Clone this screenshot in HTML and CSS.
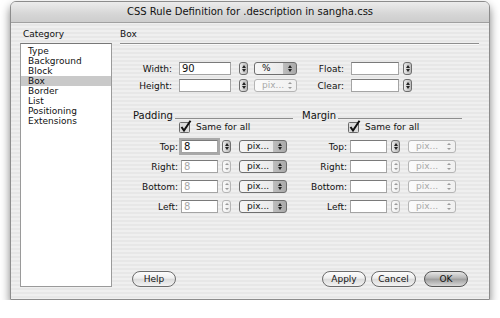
FILE: index.html
```html
<!DOCTYPE html>
<html lang="en">
<head>
    <meta charset="UTF-8">
    <title>CSS Rule Definition for .description in sangha.css</title>
    <link rel="stylesheet" href="styles.css">
</head>
<body>
    <div class="window">
        <div class="titlebar">CSS Rule Definition for .description in sangha.css</div>

        <div class="content">
            <div class="sidebar">
                <div class="caption">Category</div>
                <ul class="category-list">
                    <li>Type</li>
                    <li>Background</li>
                    <li>Block</li>
                    <li class="selected">Box</li>
                    <li>Border</li>
                    <li>List</li>
                    <li>Positioning</li>
                    <li>Extensions</li>
                </ul>
            </div>

            <div class="panel">
                <div class="panel-title">Box</div>

                <div class="box-rows">
                    <div class="row">
                        <span class="lbl lbl-main">Width:</span>
                        <span class="field field-main">90</span>
                        <span class="stepper"></span>
                        <span class="popup popup-small">%</span>
                        <span class="lbl lbl-side">Float:</span>
                        <span class="field field-side"></span>
                        <span class="stepper"></span>
                    </div>
                    <div class="row">
                        <span class="lbl lbl-main">Height:</span>
                        <span class="field field-main"></span>
                        <span class="stepper"></span>
                        <span class="popup popup-small disabled">pix...</span>
                        <span class="lbl lbl-side">Clear:</span>
                        <span class="field field-side"></span>
                        <span class="stepper"></span>
                    </div>
                </div>

                <div class="groups">
                    <div class="group">
                        <div class="group-title"><span>Padding</span></div>
                        <div class="same">
                            <svg class="check" width="14" height="13" viewBox="0 0 14 13">
                                <rect x="0.5" y="2.5" width="10" height="10" rx="1" fill="#dcdcdc" stroke="#6a6a6a"/>
                                <path d="M2.5 7 L5 10.5 L11.5 0.8" fill="none" stroke="#111" stroke-width="2"/>
                            </svg>
                            Same for all
                        </div>
                        <div class="side-row">
                            <span class="lbl lbl-side4">Top:</span>
                            <span class="field field-side4 focus">8</span>
                            <span class="stepper"></span>
                            <span class="popup popup-side4">pix...</span>
                        </div>
                        <div class="side-row">
                            <span class="lbl lbl-side4">Right:</span>
                            <span class="field field-side4 disabled">8</span>
                            <span class="stepper disabled"></span>
                            <span class="popup popup-side4">pix...</span>
                        </div>
                        <div class="side-row">
                            <span class="lbl lbl-side4">Bottom:</span>
                            <span class="field field-side4 disabled">8</span>
                            <span class="stepper disabled"></span>
                            <span class="popup popup-side4">pix...</span>
                        </div>
                        <div class="side-row">
                            <span class="lbl lbl-side4">Left:</span>
                            <span class="field field-side4 disabled">8</span>
                            <span class="stepper disabled"></span>
                            <span class="popup popup-side4">pix...</span>
                        </div>
                    </div>

                    <div class="group">
                        <div class="group-title"><span>Margin</span></div>
                        <div class="same">
                            <svg class="check" width="14" height="13" viewBox="0 0 14 13">
                                <rect x="0.5" y="2.5" width="10" height="10" rx="1" fill="#dcdcdc" stroke="#6a6a6a"/>
                                <path d="M2.5 7 L5 10.5 L11.5 0.8" fill="none" stroke="#111" stroke-width="2"/>
                            </svg>
                            Same for all
                        </div>
                        <div class="side-row">
                            <span class="lbl lbl-side4">Top:</span>
                            <span class="field field-side4"></span>
                            <span class="stepper"></span>
                            <span class="popup popup-side4 disabled">pix...</span>
                        </div>
                        <div class="side-row">
                            <span class="lbl lbl-side4">Right:</span>
                            <span class="field field-side4"></span>
                            <span class="stepper disabled"></span>
                            <span class="popup popup-side4 disabled">pix...</span>
                        </div>
                        <div class="side-row">
                            <span class="lbl lbl-side4">Bottom:</span>
                            <span class="field field-side4"></span>
                            <span class="stepper disabled"></span>
                            <span class="popup popup-side4 disabled">pix...</span>
                        </div>
                        <div class="side-row">
                            <span class="lbl lbl-side4">Left:</span>
                            <span class="field field-side4"></span>
                            <span class="stepper disabled"></span>
                            <span class="popup popup-side4 disabled">pix...</span>
                        </div>
                    </div>
                </div>

                <div class="buttons">
                    <span class="btn">Help</span>
                    <span class="spacer"></span>
                    <span class="btn">Apply</span>
                    <span class="btn btn-cancel">Cancel</span>
                    <span class="btn btn-default">OK</span>
                </div>
            </div>
        </div>
    </div>
</body>
</html>
```

FILE: styles.css
```css
* {
    margin: 0;
    padding: 0;
    box-sizing: border-box;
}

body {
    background: #fff;
    padding: 1px 10px 0 10px;
    font-family: "Lucida Grande", "DejaVu Sans", sans-serif;
    font-size: 9px;
    color: #111;
}

.window {
    width: 480px;
    height: 299px;
    border: 1px solid #8c8c8c;
    border-radius: 6px 6px 0 0;
    background: repeating-linear-gradient(#efefef 0 2px, #e7e7e7 2px 4px);
    box-shadow: 0 5px 10px rgba(0,0,0,0.5);
    display: flex;
    flex-direction: column;
    overflow: hidden;
}

.titlebar {
    height: 21px;
    line-height: 19px;
    text-align: center;
    font-size: 10px;
    color: #111;
    background: linear-gradient(#ececec, #d6d6d6 60%, #cdcdcd);
    border-bottom: 1px solid #a0a0a0;
}

.content {
    flex: 1;
    display: flex;
    padding: 5px 10px 12px 9px;
}

/* category list */
.sidebar {
    width: 92px;
    display: flex;
    flex-direction: column;
}

.caption {
    line-height: 12px;
    padding-left: 3px;
    height: 15px;
}

.category-list {
    list-style: none;
    flex: 1;
    background: #fff;
    border: 1px solid #9a9a9a;
    border-top-color: #777;
    padding-top: 2px;
}

.category-list li {
    height: 10px;
    line-height: 10px;
    padding-left: 7px;
}

.category-list li.selected {
    background: #c9c9c9;
}

/* right panel */
.panel {
    flex: 1;
    margin-left: 8px;
    display: flex;
    flex-direction: column;
}

.panel-title {
    line-height: 12px;
    padding-bottom: 3px;
    border-bottom: 1px solid #8e8e8e;
    box-shadow: 0 1px 0 #fafafa;
}

.box-rows {
    margin-top: 18px;
    display: flex;
    flex-direction: column;
    gap: 4px;
}

.row, .side-row {
    display: flex;
    align-items: center;
    height: 13px;
}

.lbl {
    text-align: right;
    margin-right: 7px;
}

.lbl-main { width: 52px; }
.lbl-side { width: 47px; margin-left: 0; }
.lbl-side4 { width: 45px; margin-right: 3px; }

.field {
    height: 13px;
    background: #fff;
    border: 1px solid #a4a4a4;
    border-top-color: #7a7a7a;
    line-height: 11px;
    padding-left: 2px;
    font-size: 10px;
}

.field.disabled {
    color: #a8a8a8;
}

.field.focus {
    box-shadow: 0 0 0 2px #a9a9a9;
}

.field-main { width: 52px; margin-right: 8px; }
.field-side { width: 48px; margin-right: 4px; }
.field-side4 { width: 37px; margin-right: 4px; }

.stepper {
    position: relative;
    width: 9px;
    height: 13px;
    border: 1px solid #6e6e6e;
    border-radius: 3px;
    background: linear-gradient(to right, #eee, #cfcfcf 50%, #bdbdbd);
    flex: none;
}

.stepper::before,
.stepper::after {
    content: "";
    position: absolute;
    left: 2px;
    border-left: 2px solid transparent;
    border-right: 2px solid transparent;
}

.stepper::before {
    top: 2px;
    border-bottom: 3px solid #222;
}

.stepper::after {
    bottom: 2px;
    border-top: 3px solid #222;
}

.stepper.disabled {
    border-color: #b5b5b5;
    background: linear-gradient(to right, #fafafa, #ececec);
}

.stepper.disabled::before { border-bottom-color: #9a9a9a; border-bottom-width: 2px; }
.stepper.disabled::after { border-top-color: #9a9a9a; border-top-width: 2px; }

.popup {
    position: relative;
    height: 13px;
    line-height: 11px;
    border: 1px solid #6e6e6e;
    border-radius: 3px;
    padding-left: 7px;
    background: linear-gradient(to right, #f6f6f6 0, #eaeaea calc(100% - 13px), #bdbdbd calc(100% - 13px), #a9a9a9);
    font-size: 9px;
    color: #111;
}

.popup::before,
.popup::after {
    content: "";
    position: absolute;
    right: 4px;
    border-left: 2px solid transparent;
    border-right: 2px solid transparent;
}

.popup::before {
    top: 2px;
    border-bottom: 3px solid #222;
}

.popup::after {
    bottom: 2px;
    border-top: 3px solid #222;
}

.popup.disabled {
    color: #a8a8a8;
    border-color: #b5b5b5;
    background: linear-gradient(to right, #fbfbfb, #f0f0f0);
}

.popup.disabled::before { border-bottom-color: #9a9a9a; border-bottom-width: 2px; }
.popup.disabled::after { border-top-color: #9a9a9a; border-top-width: 2px; }

.popup-small {
    width: 43px;
    margin-left: 6px;
}

.popup-side4 {
    width: 48px;
    margin-left: 8px;
}

/* padding / margin groups */
.groups {
    margin-top: 17px;
    display: flex;
    padding-left: 13px;
    gap: 9px;
}

.group {
    width: 160px;
    display: flex;
    flex-direction: column;
}

.group-title {
    display: flex;
    align-items: center;
    height: 12px;
    font-size: 10px;
}

.group-title::after {
    content: "";
    flex: 1;
    margin-left: 2px;
    margin-top: 6px;
    border-top: 1px solid #8e8e8e;
}

.same {
    display: flex;
    align-items: center;
    height: 12px;
    margin-top: 0;
    padding-left: 46px;
    gap: 3px;
    font-size: 9px;
}

.check {
    margin-top: -2px;
}

.group .side-row {
    margin-top: 7px;
}

.group .side-row + .side-row {
    margin-top: 7px;
}

/* buttons */
.buttons {
    margin-top: auto;
    display: flex;
    gap: 5px;
    padding-left: 12px;
    padding-right: 11px;
}

.spacer {
    flex: 1;
}

.btn {
    width: 44px;
    height: 16px;
    line-height: 14px;
    text-align: center;
    border: 1px solid #6c6c6c;
    border-radius: 8px;
    background: linear-gradient(#fdfdfd, #eeeeee 45%, #dadada 50%, #f3f3f3);
    font-size: 9px;
}

.btn-cancel {
    width: 45px;
    margin-right: 3px;
}

.btn-default {
    background: linear-gradient(#e6e6e6, #b4b4b4 45%, #9d9d9d 50%, #d8d8d8);
    border-color: #555;
}
```
